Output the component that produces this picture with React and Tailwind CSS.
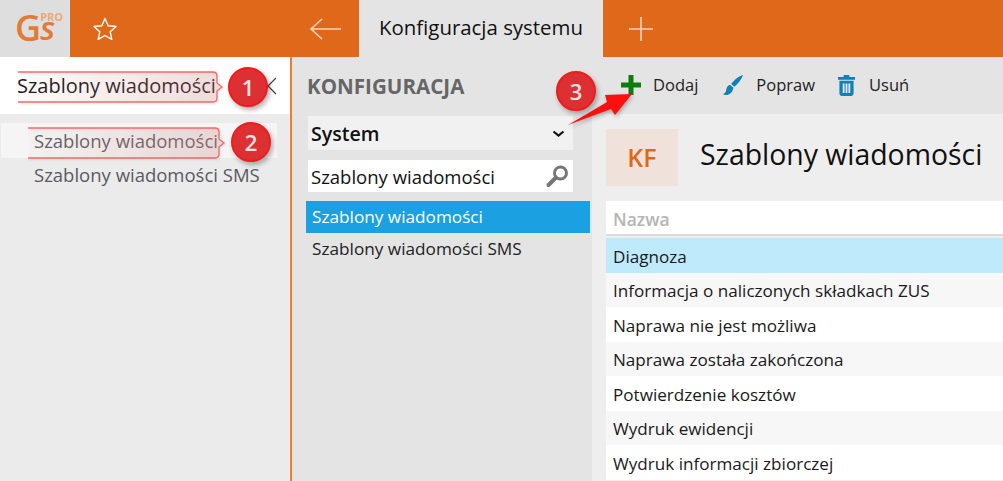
const font = { fontFamily: '"Open Sans", "Noto Sans", sans-serif' };

const rows = [
  "Diagnoza",
  "Informacja o naliczonych składkach ZUS",
  "Naprawa nie jest możliwa",
  "Naprawa została zakończona",
  "Potwierdzenie kosztów",
  "Wydruk ewidencji",
  "Wydruk informacji zbiorczej",
];

const Badge = ({ n, className }) => (
  <div className={`absolute flex h-10 w-10 items-center justify-center rounded-full border-2 border-[#f01c1c] bg-[#dd3033] text-[22px] font-semibold text-[#fbe3e3] shadow-[2px_3px_5px_rgba(0,0,0,0.3)] ${className}`}>
    {n}
  </div>
);

const Callout = ({ id, w, className }) => (
  <svg className={`absolute ${className}`} width={w} height="34" viewBox={`0 0 ${w} 34`} fill="none" style={{ filter: "drop-shadow(1px 1px 1px rgba(0,0,0,0.15))" }}>
    <defs>
      <linearGradient id={id} x1="0" x2="1" y1="0" y2="0">
        <stop offset="0" stopColor="#f8b8b8" stopOpacity="0.05" />
        <stop offset="1" stopColor="#e89a9a" stopOpacity="0.3" />
      </linearGradient>
    </defs>
    <path
      d={`M0 2H${w - 12}Q${w - 8} 2 ${w - 8} 6V13L${w - 3} 17L${w - 8} 21V28Q${w - 8} 32 ${w - 12} 32H0`}
      fill={`url(#${id})`}
      stroke="#f43f3f"
      strokeWidth="1.3"
      strokeOpacity="0.75"
    />
  </svg>
);

export default function App() {
  return (
    <div className="relative flex h-[481px] w-[1003px] flex-col overflow-hidden bg-white text-[#111]">
      <div className="flex h-[57px] shrink-0 bg-[#e0681a]">
        <div style={font} className="flex h-full w-[70px] bg-[#dedede] pl-[15px] text-[#e37b36]">
          <span className="mt-[8px] h-[40px] text-[36px] font-semibold leading-[40px]">G</span>
          <div className="flex flex-col">
            <span className="-ml-px mt-[11px] h-[12px] text-[11px] font-bold leading-[12px] text-[#eba77c]">PRO</span>
            <span className="-ml-[1px] h-[18px] text-[33px] font-semibold italic leading-[10px]">s</span>
          </div>
        </div>
        <div className="flex w-[220px] items-center pl-[22px]">
          <svg width="26" height="26" viewBox="0 0 26 26" fill="none" stroke="#fff" strokeWidth="1.4" strokeLinejoin="round">
            <path d="M13 2.5L16.2 9.7L24 10.5L18.2 15.7L19.8 23.4L13 19.5L6.2 23.4L7.8 15.7L2 10.5L9.8 9.7Z" />
          </svg>
        </div>
        <div className="flex w-[69px] items-center justify-center">
          <svg width="32" height="24" viewBox="0 0 32 24" fill="none" stroke="#f7d5bd" strokeWidth="1.6">
            <path d="M32 12H2M13 2L2 12L13 22" />
          </svg>
        </div>
        <div style={font} className="flex w-[244px] items-center justify-center bg-[#e4e4e4] pb-[2px] text-[20.4px] font-medium text-[#111]">
          Konfiguracja systemu
        </div>
        <div className="flex w-[76px] items-center justify-center">
          <svg width="26" height="26" viewBox="0 0 26 26" fill="none" stroke="#f7d5bd" strokeWidth="1.6">
            <path d="M13 1V25M1 13H25" />
          </svg>
        </div>
      </div>

      <div style={font} className="flex min-h-0 flex-1">
        <div className="flex w-[290px] shrink-0 flex-col bg-[#ebebeb]">
          <div className="flex h-[57px] items-center justify-between bg-white pl-[17px] pr-[13px] text-[20px] text-[#111]">
            <span>Szablony wiadomości</span>
            <svg width="18" height="18" viewBox="0 0 18 18" stroke="#444" strokeWidth="1.2">
              <path d="M1 1L17 17M17 1L1 17" />
            </svg>
          </div>
          <div className="mt-[9px] flex flex-col pl-px pr-[13px] text-[18.5px] text-[#5a5a60]">
            <div className="flex h-[35px] items-center bg-[#f5f5f5] pl-[33px] pt-[1px]">Szablony wiadomości</div>
            <div className="flex h-[34px] items-center pl-[33px]">Szablony wiadomości SMS</div>
          </div>
        </div>

        <div className="w-[2px] shrink-0 bg-[#ed7d31]" />

        <div className="flex min-w-0 flex-1 flex-col bg-[#e4e4e4]">
          <div className="flex min-h-0 flex-1">
            <div className="flex w-[300px] shrink-0 flex-col pl-[14px] pr-[2px]">
              <div className="flex h-[59px] items-center pb-[1px] pl-px text-[20.6px] font-bold text-[#666]">KONFIGURACJA</div>
              <div className="ml-[2px] mr-[17px] flex h-[34px] items-center justify-between bg-[#f1f1f1] pl-[3px] pr-[8px] pt-[2px] text-[19.6px] font-semibold text-[#111]">
                System
                <svg width="13" height="8" viewBox="0 0 13 8" fill="none" stroke="#111" strokeWidth="2.2">
                  <path d="M1.5 1.5L6.5 5.5L11.5 1.5" />
                </svg>
              </div>
              <div className="ml-[2px] mr-[17px] mt-[10px] flex h-[32px] items-center justify-between bg-white pl-[3px] pr-[3px] text-[18.5px] text-[#111]">
                <span className="pt-[2px]">Szablony wiadomości</span>
                <svg width="25" height="25" viewBox="0 0 25 25" fill="none">
                  <circle cx="15.5" cy="9" r="6" stroke="#777" strokeWidth="3" />
                  <path d="M10.5 14L3.5 21" stroke="#777" strokeWidth="4" strokeLinecap="round" />
                </svg>
              </div>
              <div className="mt-[9px] flex h-[32px] items-center bg-[#1ba1e2] pl-[6px] text-[17.2px] text-white">Szablony wiadomości</div>
              <div className="flex h-[32px] items-center pl-[6px] text-[17.2px] text-[#222]">Szablony wiadomości SMS</div>
            </div>

            <div className="flex min-w-0 flex-1 flex-col">
              <div className="flex h-[57px] items-center gap-[23px] pb-[1px] pl-[29px] text-[16.5px] text-[#222]">
                <div className="flex items-center gap-[12px]">
                  <svg width="20" height="20" viewBox="0 0 20 20" fill="#0f7b0f">
                    <path d="M7.5 0H12.5V7.5H20V12.5H12.5V20H7.5V12.5H0V7.5H7.5Z" />
                  </svg>
                  Dodaj
                </div>
                <div className="ml-px flex items-center gap-[12px]">
                  <svg width="22" height="22" viewBox="0 0 24 24" fill="#0f80b8">
                    <path d="M23 1C19 2 13 6 10 11L13.5 14C17 11 21 6 23 1Z" />
                    <path d="M9 12C6 12 5 15 4.5 18C4 20 3 21 1 22C5 24 11 23 12.5 15Z" />
                  </svg>
                  Popraw
                </div>
                <div className="flex items-center gap-[14px]">
                  <svg width="17" height="21" viewBox="0 0 18 22" fill="#0f80b8">
                    <path d="M6 0H12V2H18V5H0V2H6Z" />
                    <path fillRule="evenodd" d="M1.5 6H16.5V19.5Q16.5 22 14 22H4Q1.5 22 1.5 19.5ZM5 9V19H7V9ZM8 9V19H10V9ZM11 9V19H13V9Z" />
                  </svg>
                  Usuń
                </div>
              </div>
              <div className="flex min-h-0 flex-1 flex-col bg-[#eeeeee] pl-[14px]">
                <div className="mt-[15px] flex h-[57px] shrink-0 items-center">
                  <div className="flex h-[57px] w-[72px] items-center justify-center bg-[#f0e2da] text-[25px] font-semibold text-[#e0681a]">KF</div>
                  <div className="ml-[22px] pb-[6px] text-[28.4px] text-[#111]">Szablony wiadomości</div>
                </div>
                <div className="mt-[15px] flex h-[35px] shrink-0 items-center border-b-2 border-[#dcdcdc] bg-white pl-[7px] pt-[3px] text-[17.5px] font-semibold text-[#b5b5b5]">Nazwa</div>
                <div className="mt-[2px] flex flex-col">
                  {rows.map((r, i) => (
                    <div key={r} className={`flex h-[34.5px] shrink-0 items-center pl-[7px] pt-[3px] text-[17.1px] text-[#1a1a1a] ${i === 0 ? "bg-[#bfeafc]" : i % 2 ? "bg-[#f7f7f7]" : "bg-white"}`}>
                      {r}
                    </div>
                  ))}
                </div>
              </div>
            </div>
          </div>
        </div>
      </div>

      <Callout id="c1" w={207} className="left-[18px] top-[70px]" />
      <Callout id="c2" w={199} className="left-[28px] top-[126px]" />
      <div style={font}>
        <Badge n="1" className="left-[228px] top-[67px]" />
        <Badge n="2" className="left-[231px] top-[122px]" />
        <Badge n="3" className="left-[556px] top-[71px]" />
      </div>
      <svg className="absolute left-[565px] top-[90px]" width="80" height="40" viewBox="0 0 80 40" style={{ filter: "drop-shadow(1px 2px 2px rgba(0,0,0,0.3))" }}>
        <path d="M3 35L42 12L40 5L67 4L50 25L46 19Z" fill="#fb1010" />
      </svg>
    </div>
  );
}
